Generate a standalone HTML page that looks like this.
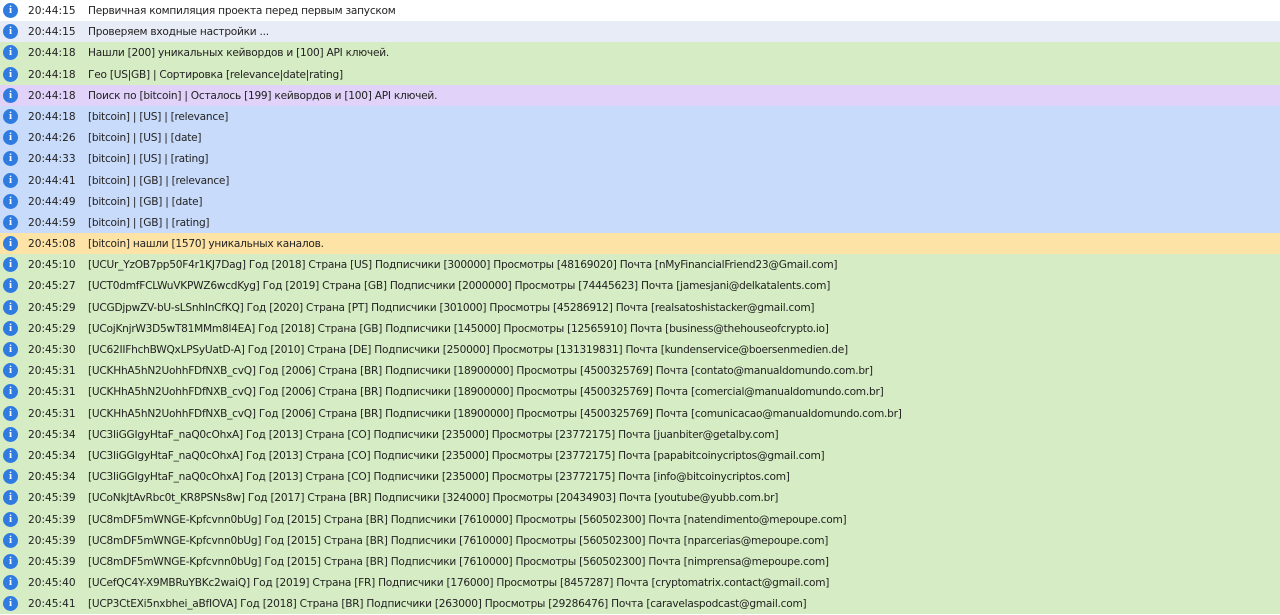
<!DOCTYPE html><html><head><meta charset="utf-8"><style>
body{margin:0;width:1280px;height:615px;overflow:hidden;background:#fff;font-family:"DejaVu Sans","Liberation Sans",sans-serif;font-size:10.6px;color:#222}
.r{height:21.2px;position:relative;white-space:nowrap}
.r i{position:absolute;left:3px;top:3px;width:15px;height:15px;border-radius:50%;background:#2f7be0;color:#fff;font-style:normal;font-weight:bold;font-size:11px;line-height:15px;text-align:center;font-family:"Liberation Serif",serif}
.r .t{position:absolute;left:28px;top:5px;letter-spacing:0}
.r .m{position:absolute;left:88px;top:5px;letter-spacing:-0.25px}
.w{background:#fff}.l{background:#e8ecf6}.g{background:#d6ecc4}.p{background:#e0d2f9}.b{background:#c9dbfb}.o{background:#fde3a6}
</style></head><body>
<div class="r w"><i>i</i><span class="t">20:44:15</span><span class="m">Первичная компиляция проекта перед первым запуском</span></div>
<div class="r l"><i>i</i><span class="t">20:44:15</span><span class="m">Проверяем входные настройки ...</span></div>
<div class="r g"><i>i</i><span class="t">20:44:18</span><span class="m">Нашли [200] уникальных кейвордов и [100] API ключей.</span></div>
<div class="r g"><i>i</i><span class="t">20:44:18</span><span class="m">Гео [US|GB] | Сортировка [relevance|date|rating]</span></div>
<div class="r p"><i>i</i><span class="t">20:44:18</span><span class="m">Поиск по [bitcoin] | Осталось [199] кейвордов и [100] API ключей.</span></div>
<div class="r b"><i>i</i><span class="t">20:44:18</span><span class="m">[bitcoin] | [US] | [relevance]</span></div>
<div class="r b"><i>i</i><span class="t">20:44:26</span><span class="m">[bitcoin] | [US] | [date]</span></div>
<div class="r b"><i>i</i><span class="t">20:44:33</span><span class="m">[bitcoin] | [US] | [rating]</span></div>
<div class="r b"><i>i</i><span class="t">20:44:41</span><span class="m">[bitcoin] | [GB] | [relevance]</span></div>
<div class="r b"><i>i</i><span class="t">20:44:49</span><span class="m">[bitcoin] | [GB] | [date]</span></div>
<div class="r b"><i>i</i><span class="t">20:44:59</span><span class="m">[bitcoin] | [GB] | [rating]</span></div>
<div class="r o"><i>i</i><span class="t">20:45:08</span><span class="m">[bitcoin] нашли [1570] уникальных каналов.</span></div>
<div class="r g"><i>i</i><span class="t">20:45:10</span><span class="m">[UCUr_YzOB7pp50F4r1KJ7Dag] Год [2018] Страна [US] Подписчики [300000] Просмотры [48169020] Почта [nMyFinancialFriend23@Gmail.com]</span></div>
<div class="r g"><i>i</i><span class="t">20:45:27</span><span class="m">[UCT0dmfFCLWuVKPWZ6wcdKyg] Год [2019] Страна [GB] Подписчики [2000000] Просмотры [74445623] Почта [jamesjani@delkatalents.com]</span></div>
<div class="r g"><i>i</i><span class="t">20:45:29</span><span class="m">[UCGDjpwZV-bU-sLSnhInCfKQ] Год [2020] Страна [PT] Подписчики [301000] Просмотры [45286912] Почта [realsatoshistacker@gmail.com]</span></div>
<div class="r g"><i>i</i><span class="t">20:45:29</span><span class="m">[UCojKnjrW3D5wT81MMm8l4EA] Год [2018] Страна [GB] Подписчики [145000] Просмотры [12565910] Почта [business@thehouseofcrypto.io]</span></div>
<div class="r g"><i>i</i><span class="t">20:45:30</span><span class="m">[UC62IIFhchBWQxLPSyUatD-A] Год [2010] Страна [DE] Подписчики [250000] Просмотры [131319831] Почта [kundenservice@boersenmedien.de]</span></div>
<div class="r g"><i>i</i><span class="t">20:45:31</span><span class="m">[UCKHhA5hN2UohhFDfNXB_cvQ] Год [2006] Страна [BR] Подписчики [18900000] Просмотры [4500325769] Почта [contato@manualdomundo.com.br]</span></div>
<div class="r g"><i>i</i><span class="t">20:45:31</span><span class="m">[UCKHhA5hN2UohhFDfNXB_cvQ] Год [2006] Страна [BR] Подписчики [18900000] Просмотры [4500325769] Почта [comercial@manualdomundo.com.br]</span></div>
<div class="r g"><i>i</i><span class="t">20:45:31</span><span class="m">[UCKHhA5hN2UohhFDfNXB_cvQ] Год [2006] Страна [BR] Подписчики [18900000] Просмотры [4500325769] Почта [comunicacao@manualdomundo.com.br]</span></div>
<div class="r g"><i>i</i><span class="t">20:45:34</span><span class="m">[UC3IiGGIgyHtaF_naQ0cOhxA] Год [2013] Страна [CO] Подписчики [235000] Просмотры [23772175] Почта [juanbiter@getalby.com]</span></div>
<div class="r g"><i>i</i><span class="t">20:45:34</span><span class="m">[UC3IiGGIgyHtaF_naQ0cOhxA] Год [2013] Страна [CO] Подписчики [235000] Просмотры [23772175] Почта [papabitcoinycriptos@gmail.com]</span></div>
<div class="r g"><i>i</i><span class="t">20:45:34</span><span class="m">[UC3IiGGIgyHtaF_naQ0cOhxA] Год [2013] Страна [CO] Подписчики [235000] Просмотры [23772175] Почта [info@bitcoinycriptos.com]</span></div>
<div class="r g"><i>i</i><span class="t">20:45:39</span><span class="m">[UCoNkJtAvRbc0t_KR8PSNs8w] Год [2017] Страна [BR] Подписчики [324000] Просмотры [20434903] Почта [youtube@yubb.com.br]</span></div>
<div class="r g"><i>i</i><span class="t">20:45:39</span><span class="m">[UC8mDF5mWNGE-Kpfcvnn0bUg] Год [2015] Страна [BR] Подписчики [7610000] Просмотры [560502300] Почта [natendimento@mepoupe.com]</span></div>
<div class="r g"><i>i</i><span class="t">20:45:39</span><span class="m">[UC8mDF5mWNGE-Kpfcvnn0bUg] Год [2015] Страна [BR] Подписчики [7610000] Просмотры [560502300] Почта [nparcerias@mepoupe.com]</span></div>
<div class="r g"><i>i</i><span class="t">20:45:39</span><span class="m">[UC8mDF5mWNGE-Kpfcvnn0bUg] Год [2015] Страна [BR] Подписчики [7610000] Просмотры [560502300] Почта [nimprensa@mepoupe.com]</span></div>
<div class="r g"><i>i</i><span class="t">20:45:40</span><span class="m">[UCefQC4Y-X9MBRuYBKc2waiQ] Год [2019] Страна [FR] Подписчики [176000] Просмотры [8457287] Почта [cryptomatrix.contact@gmail.com]</span></div>
<div class="r g"><i>i</i><span class="t">20:45:41</span><span class="m">[UCP3CtEXi5nxbhei_aBfIOVA] Год [2018] Страна [BR] Подписчики [263000] Просмотры [29286476] Почта [caravelaspodcast@gmail.com]</span></div>
</body></html>
